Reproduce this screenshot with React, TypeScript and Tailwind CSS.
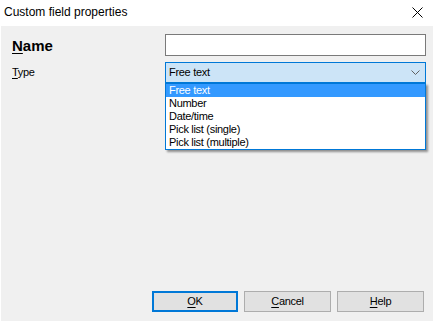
export default function App() {
  const items = ["Free text", "Number", "Date/time", "Pick list (single)", "Pick list (multiple)"];

  return (
    <div className="w-[434px] h-[322px] bg-white flex flex-col font-['Liberation_Sans',Arial,sans-serif] text-[11px] tracking-[-0.3px] text-black leading-none">
      {/* title bar */}
      <div className="h-[26px] flex items-center justify-between pl-[4px] pr-[11px]">
        <span className="text-[12px] tracking-normal pb-[2px]">Custom field properties</span>
        <svg width="11" height="11" viewBox="0 0 11 11" className="mb-[1px]">
          <path d="M0.5 0.5 L10.5 10.5 M10.5 0.5 L0.5 10.5" stroke="#000" strokeWidth="1" fill="none" />
        </svg>
      </div>

      {/* body */}
      <div className="relative flex-1 mx-px mb-px bg-[#f0f0f0] flex flex-col pl-[11px] pr-[7px] pt-[8px] pb-[9px]">
        <div className="grid grid-cols-[153px_261px] gap-y-[6px] items-center">
          <div className="text-[15px] font-bold tracking-normal">
            <span className="underline underline-offset-2">N</span>ame
          </div>
          <div className="h-[22px] bg-white border border-[#7a7a7a]" />

          <div>
            <span className="underline underline-offset-2">T</span>ype
          </div>
          <div className="h-[21px] bg-[#cce4f7] border border-[#0078d7] flex items-center justify-between pl-[3px] pr-[5px]">
            <span>Free text</span>
            <svg width="9" height="5" viewBox="0 0 9 5">
              <path d="M0.5 0.5 L4.5 4.5 L8.5 0.5" stroke="#606060" strokeWidth="1" fill="none" />
            </svg>
          </div>
        </div>

        {/* open list */}
        <div className="absolute left-[164px] top-[57px] w-[261px] bg-white border border-[#0078d7] shadow-[2px_2px_2px_rgba(0,0,0,0.4)]">
          {items.map((it, i) => (
            <div
              key={it}
              className={`h-[13px] flex items-center pl-[3px] ${i === 0 ? "bg-[#3399ff] text-white" : ""}`}
            >
              {it}
            </div>
          ))}
        </div>

        <div className="mt-auto flex justify-end gap-[6px] mr-[2px]">
          <button className="w-[86px] h-[21px] bg-[#e1e1e1] border-2 border-[#0078d7] flex items-center justify-center">
            <span><span className="underline underline-offset-2">O</span>K</span>
          </button>
          <button className="w-[87px] h-[21px] bg-[#e1e1e1] border border-[#adadad] flex items-center justify-center">
            <span><span className="underline underline-offset-2">C</span>ancel</span>
          </button>
          <button className="w-[87px] h-[21px] bg-[#e1e1e1] border border-[#adadad] flex items-center justify-center">
            <span><span className="underline underline-offset-2">H</span>elp</span>
          </button>
        </div>
      </div>
    </div>
  );
}
